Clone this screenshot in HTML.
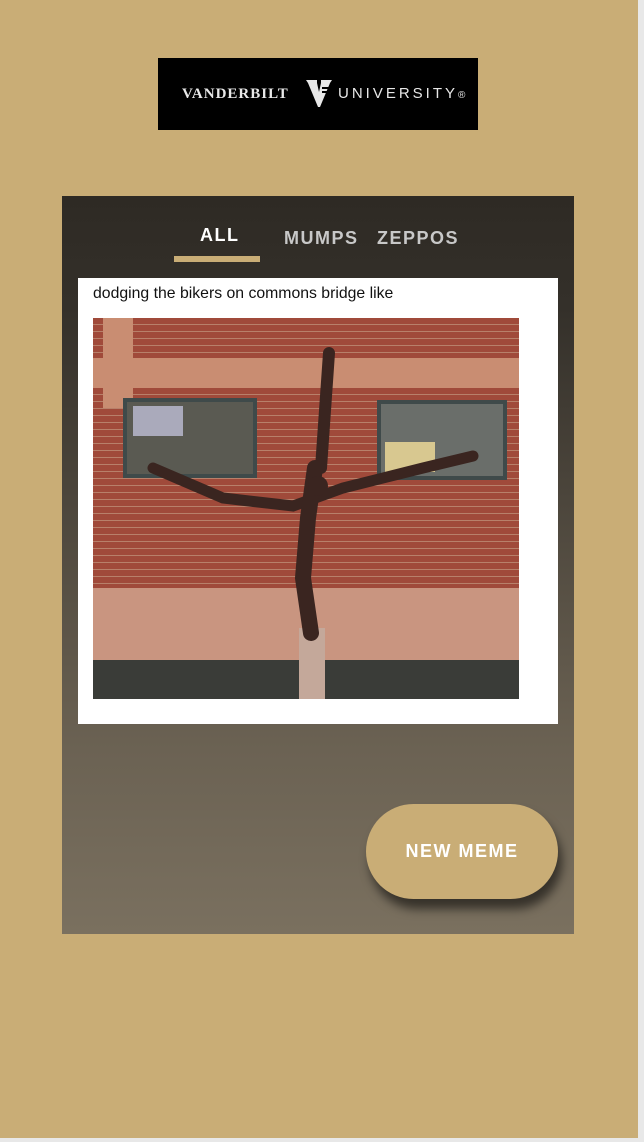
<!DOCTYPE html>
<html><head><meta charset="utf-8"><style>
*{margin:0;padding:0;box-sizing:border-box}
html,body{width:644px;height:1142px;overflow:hidden;background:#e8e8e8}
#page{position:absolute;left:0;top:0;width:638px;height:1138px;background:#c9ad76}
.logo{position:absolute;left:158px;top:58px;width:320px;height:72px;background:#000;color:#e8e8e8;font-family:"Liberation Serif",serif}
.logo .l{position:absolute;left:24px;top:28px;font-size:15px;letter-spacing:1px;font-weight:bold}
.logo .r{position:absolute;left:180px;top:27px;font-size:15px;letter-spacing:3px;font-family:"Liberation Sans",sans-serif}
.card{position:absolute;left:62px;top:196px;width:512px;height:738px;background:linear-gradient(#2e2a24 0%,#34302a 15%,#6b6253 75%,#7a705f 100%)}
.tab{position:absolute;top:226px;font-family:"Liberation Sans",sans-serif;font-weight:bold;font-size:18px;letter-spacing:1.5px;color:#c8c8c8}
.meme{position:absolute;left:78px;top:278px;width:480px;height:446px;background:#fff}
.cap{position:absolute;left:93px;top:285px;font-family:"Liberation Sans",sans-serif;font-size:15.8px;color:#111}
.img{position:absolute;left:93px;top:318px;width:426px;height:381px;overflow:hidden;background:#a4503e}
.btn{position:absolute;left:366px;top:804px;width:192px;height:95px;border-radius:48px;background:#c9ad76;box-shadow:4px 10px 10px rgba(0,0,0,.55);color:#fff;font-family:"Liberation Sans",sans-serif;font-weight:bold;font-size:18px;letter-spacing:1.5px;text-align:center;line-height:95px}
</style></head><body><div id="page">
<div class="logo"><span class="l">VANDERBILT</span>
<svg style="position:absolute;left:148px;top:22px" width="26" height="28" viewBox="0 0 26 28"><path d="M0 0H11V3L13 12L15 3V0H26L24 3L14 27H12L2 3Z" fill="#e8e8e8"/><path d="M16 8H23M16 12H21" stroke="#000" stroke-width="2"/></svg>
<span class="r">UNIVERSITY<span style="font-size:10px">®</span></span></div>
<div class="card"></div>
<div class="tab" style="left:200px;top:225px;color:#fff">ALL</div>
<div style="position:absolute;left:174px;top:256px;width:86px;height:6px;background:#c9ad76"></div>
<div class="tab" style="left:284px;top:228px">MUMPS</div>
<div class="tab" style="left:377px;top:228px">ZEPPOS</div>
<div class="meme"></div>
<div class="cap">dodging the bikers on commons bridge like</div>
<div class="img">
<div style="position:absolute;left:0;top:0;width:426px;height:381px;background:repeating-linear-gradient(#a04a3a 0 6px,#b8806a 6px 7px)"></div>
<div style="position:absolute;left:0;top:40px;width:426px;height:30px;background:#c98d72"></div>
<div style="position:absolute;left:10px;top:0;width:30px;height:90px;background:#c98d72"></div>
<div style="position:absolute;left:30px;top:80px;width:134px;height:80px;background:#5a5a52;border:4px solid #3f4a4a"></div>
<div style="position:absolute;left:40px;top:88px;width:50px;height:30px;background:#aab;"></div>
<div style="position:absolute;left:284px;top:82px;width:130px;height:80px;background:#6a6e6a;border:4px solid #3f4a4a"></div>
<div style="position:absolute;left:292px;top:124px;width:50px;height:30px;background:#d8c890"></div>
<div style="position:absolute;left:0;top:270px;width:426px;height:72px;background:#c99580"></div>
<div style="position:absolute;left:0;top:342px;width:426px;height:40px;background:#3a3c38"></div>
<div style="position:absolute;left:206px;top:310px;width:26px;height:71px;background:#c4a89a"></div>
<svg style="position:absolute;left:0;top:0" width="426" height="381"><g stroke="#3a2520" stroke-linecap="round" fill="none"><path d="M236 35L228 150" stroke-width="12"/><path d="M60 150L130 180L200 188L250 170L330 150L380 138" stroke-width="11"/><path d="M222 150L215 200L210 260L218 315" stroke-width="16"/></g><circle cx="225" cy="168" r="10" fill="#3a2520"/></svg>
</div>
<div class="btn">NEW MEME</div>
</div></body></html>
